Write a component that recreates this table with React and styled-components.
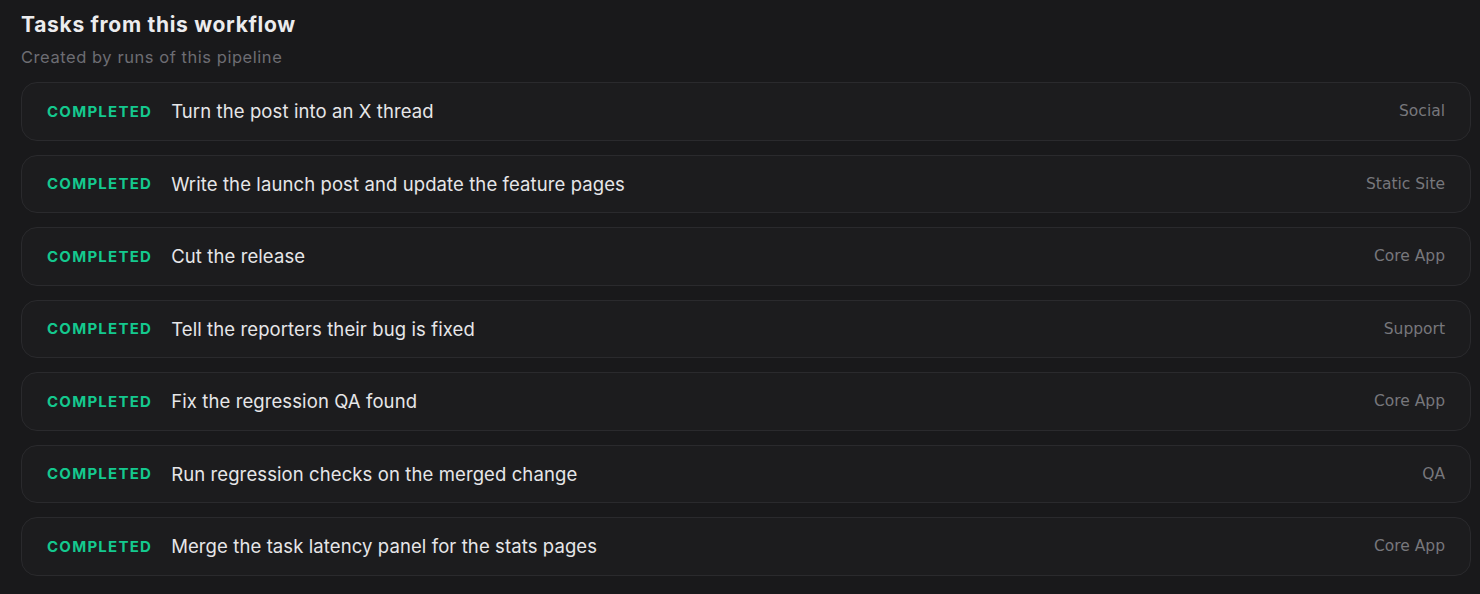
import React from "react";
import styled, { createGlobalStyle } from "styled-components";

const Global = createGlobalStyle`
  html, body { margin: 0; padding: 0; background: #19191b; }
  body { font-family: Inter, "Noto Sans", sans-serif; }
`;

const Page = styled.div`
  padding: 11px 9px 0 21px;
  display: flex;
  flex-direction: column;
`;

const Title = styled.h2`
  margin: 0;
  font-size: 21px;
  line-height: 28px;
  font-weight: 700;
  letter-spacing: 0.7px;
  color: #ececee;
`;

const Subtitle = styled.p`
  margin: 6px 0 0;
  font-size: 16.5px;
  line-height: 24px;
  letter-spacing: 0.55px;
  color: #6d6d73;
`;

const List = styled.div`
  margin-top: 13px;
  display: flex;
  flex-direction: column;
  gap: 14px;
`;

const Row = styled.div`
  height: 58.5px;
  box-sizing: border-box;
  border: 1px solid #2a2a2d;
  border-radius: 16px;
  background: #1c1c1e;
  display: flex;
  align-items: center;
  padding: 0 25px;
`;

const Status = styled.span`
  font-size: 15px;
  font-weight: 700;
  letter-spacing: 1.25px;
  color: #14c98e;
  text-transform: uppercase;
  margin-right: 19px;
`;

const Name = styled.span`
  flex: 1;
  font-size: 18.5px;
  letter-spacing: 0.1px;
  color: #e6e6e8;
`;

const Tag = styled.span`
  font-family: "DejaVu Sans", sans-serif;
  font-size: 15.5px;
  color: #77777c;
`;

const tasks = [
  ["Turn the post into an X thread", "Social"],
  ["Write the launch post and update the feature pages", "Static Site"],
  ["Cut the release", "Core App"],
  ["Tell the reporters their bug is fixed", "Support"],
  ["Fix the regression QA found", "Core App"],
  ["Run regression checks on the merged change", "QA"],
  ["Merge the task latency panel for the stats pages", "Core App"],
];

export default function App() {
  return (
    <Page>
      <Global />
      <Title>Tasks from this workflow</Title>
      <Subtitle>Created by runs of this pipeline</Subtitle>
      <List>
        {tasks.map(([name, tag], i) => (
          <Row key={i}>
            <Status>Completed</Status>
            <Name>{name}</Name>
            <Tag>{tag}</Tag>
          </Row>
        ))}
      </List>
    </Page>
  );
}
